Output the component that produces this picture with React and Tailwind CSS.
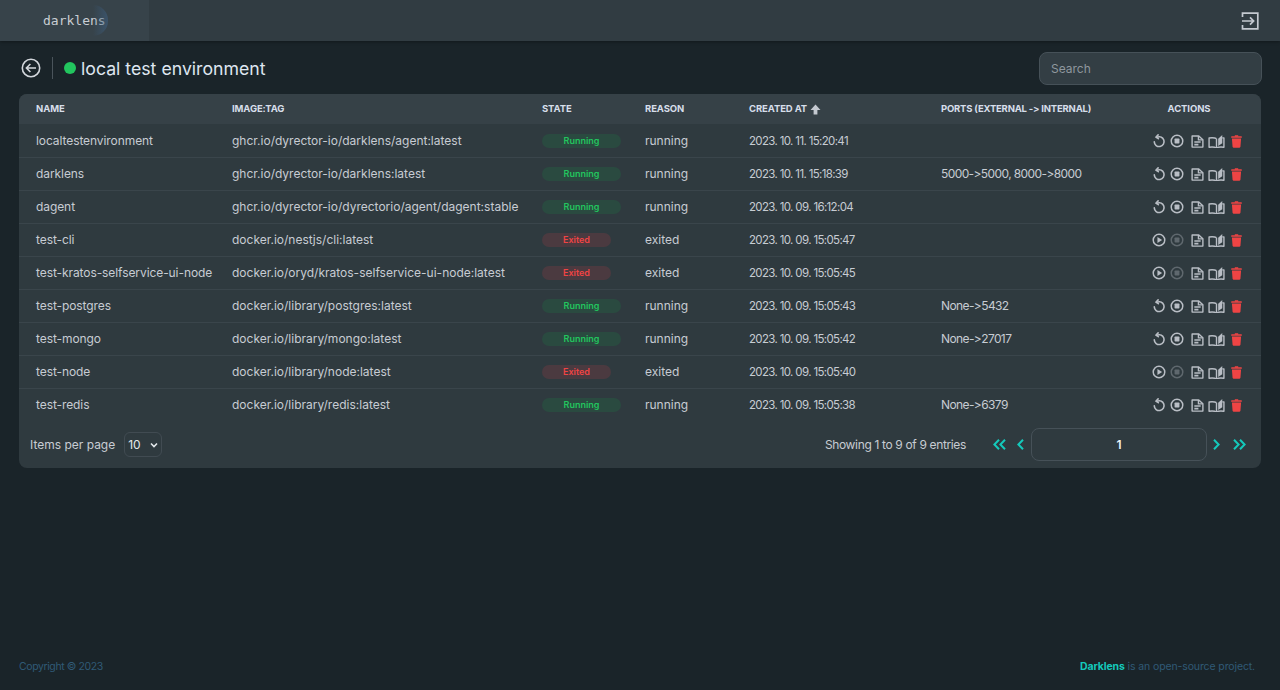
import React from "react";

const rows = [
  ["localtestenvironment", "ghcr.io/dyrector-io/darklens/agent:latest", true, "2023. 10. 11. 15:20:41", ""],
  ["darklens", "ghcr.io/dyrector-io/darklens:latest", true, "2023. 10. 11. 15:18:39", "5000->5000, 8000->8000"],
  ["dagent", "ghcr.io/dyrector-io/dyrectorio/agent/dagent:stable", true, "2023. 10. 09. 16:12:04", ""],
  ["test-cli", "docker.io/nestjs/cli:latest", false, "2023. 10. 09. 15:05:47", ""],
  ["test-kratos-selfservice-ui-node", "docker.io/oryd/kratos-selfservice-ui-node:latest", false, "2023. 10. 09. 15:05:45", ""],
  ["test-postgres", "docker.io/library/postgres:latest", true, "2023. 10. 09. 15:05:43", "None->5432"],
  ["test-mongo", "docker.io/library/mongo:latest", true, "2023. 10. 09. 15:05:42", "None->27017"],
  ["test-node", "docker.io/library/node:latest", false, "2023. 10. 09. 15:05:40", ""],
  ["test-redis", "docker.io/library/redis:latest", true, "2023. 10. 09. 15:05:38", "None->6379"],
];

const ic = "#b9bec5";

function Restart() {
  return (
    <svg width="14" height="14" viewBox="0 0 16 16" fill="none" stroke={ic} strokeWidth="1.8" strokeLinecap="round" className="block">
      <path d="M5.6 3.8A5.6 5.6 0 1 1 2.6 9" strokeDasharray="3.4 1.1 26 1" />
      <path d="M7 1 4.6 3.6 7.2 5.4" />
    </svg>
  );
}
function Stop({ dim }) {
  return (
    <svg width="14" height="14" viewBox="0 0 16 16" fill="none" opacity={dim ? 0.35 : 1} className="block">
      <circle cx="8" cy="8" r="6.6" stroke={ic} strokeWidth="1.7" />
      <rect x="5.2" y="5.2" width="5.6" height="5.6" rx="0.8" fill={ic} />
    </svg>
  );
}
function Play() {
  return (
    <svg width="14" height="14" viewBox="0 0 16 16" fill="none" className="block">
      <circle cx="8" cy="8" r="6.6" stroke={ic} strokeWidth="1.7" />
      <path d="M6.2 4.6v6.8L11.6 8z" fill={ic} />
    </svg>
  );
}
function Doc() {
  return (
    <svg width="13" height="13" viewBox="0 0 14 14" fill="none" stroke={ic} strokeWidth="1.5" className="block">
      <path d="M1.2 1h7.2l4.4 4v8H1.2z" strokeLinejoin="round" />
      <path d="M8 1.2v4h4.6" />
      <path d="M3.6 7.6h6.8M3.6 10.4h4.4" strokeWidth="1.7" />
    </svg>
  );
}
function Book() {
  return (
    <svg width="17" height="13" viewBox="0 0 18 14" fill="none" stroke={ic} strokeWidth="1.5" strokeLinejoin="round" className="block">
      <path d="M9 4C7.4 3 4.4 2.8 1 3.2v10c3.4-.4 6.4-.2 8 .8 1.6-1 4.6-1.2 8-.8v-10c-.6-.1-1.2-.1-1.8-.1" />
      <path d="M9 4v10" />
      <path d="M10.8 11.8V4L15.2 0v9z" fill={ic} stroke="none" />
    </svg>
  );
}
function Trash() {
  return (
    <svg width="11" height="13" viewBox="0 0 12 14" fill="#ef4444" className="block">
      <path d="M1 3.6h10l-.7 9.2a1 1 0 0 1-1 .9H2.7a1 1 0 0 1-1-.9z" />
      <rect x="0.2" y="1.4" width="11.6" height="1.5" rx="0.4" />
      <rect x="4" y="0.2" width="4" height="1.6" rx="0.4" />
    </svg>
  );
}
function Chevron({ dir, double }) {
  const d = dir === "left" ? "M6 .8 1.4 5.5 6 10.2" : "M1 .8 5.6 5.5 1 10.2";
  const d2 = dir === "left" ? "M12 .8 7.4 5.5 12 10.2" : "M7 .8 11.6 5.5 7 10.2";
  return (
    <svg width={double ? 13 : 7} height="11" viewBox={double ? "0 0 13 11" : "0 0 7 11"} fill="none" stroke="#14c9bb" strokeWidth="2" className="block">
      <path d={d} />
      {double && <path d={d2} />}
    </svg>
  );
}

export default function App() {
  return (
    <div className="flex flex-col h-[690px] bg-[#1a2429] overflow-hidden font-['Inter','Noto_Sans',sans-serif] text-[#c7ccd3] [font-variant-ligatures:none] [font-feature-settings:'calt'_0]">
      <header className="flex h-[41px] shrink-0 items-center justify-between bg-[#313c42] shadow-[0_1px_3px_rgba(0,0,0,0.35)]">
        <div className="flex h-full w-[149px] items-center bg-[#37434a] pl-[43px]">
          <span className="relative font-['DejaVu_Sans_Mono',monospace] text-[13px] leading-none text-[#c9ced3]">
            darklens
            <span className="absolute left-[50px] top-[-9px] h-[31px] w-[15px] rounded-r-full bg-gradient-to-r from-transparent to-[#3c5a78]/70" />
          </span>
        </div>
        <button className="mr-[21px] text-[#c4c9d0]">
          <svg width="18" height="18" viewBox="0 0 18 18" fill="none" stroke="#c4c9d0" strokeWidth="1.7" className="block">
            <path d="M1.5 5V1.2h15.3v15.6H1.5V13" />
            <path d="M1 9h11M9 5.4 12.6 9 9 12.6" />
          </svg>
        </button>
      </header>

      <main className="flex flex-1 flex-col px-[19px]">
        <div className="flex h-[53px] items-center justify-between">
          <div className="flex items-center pt-[1px]">
            <svg width="20" height="20" viewBox="0 0 20 20" fill="none" stroke="#d3d7dc" strokeWidth="1.6" className="ml-[2px]">
              <circle cx="10" cy="10" r="8.7" />
              <path d="M15 10H5.6M9.4 6 5.4 10l4 4" />
            </svg>
            <div className="ml-[11px] h-[22px] w-px bg-[#4a545b]" />
            <span className="ml-[11px] h-[12px] w-[12px] rounded-full bg-[#22c55e]" />
            <h1 className="ml-[5px] pt-[1px] text-[17.7px] font-normal leading-none text-[#dfe6f0]">local test environment</h1>
          </div>
          <div className="mr-[-1px] mt-[1px] flex h-[33px] w-[223px] items-center rounded-lg border border-[#465158] bg-[#333e44] pl-[11px] pt-[1px] text-[12px] text-[#8f979e]">
            Search
          </div>
        </div>

        <div className="w-[1242px] rounded-lg bg-[#2f3a3f]">
          <table className="w-full table-fixed border-collapse text-left">
            <colgroup>
              <col className="w-[213px]" />
              <col className="w-[310px]" />
              <col className="w-[103px]" />
              <col className="w-[104px]" />
              <col className="w-[192px]" />
              <col className="w-[190px]" />
              <col />
            </colgroup>
            <thead>
              <tr className="h-[30px] text-[9.5px] uppercase tracking-[-0.1px] text-[#d6deea]">
                <th className="rounded-tl-lg bg-[#364147] pl-[17px] font-bold">Name</th>
                <th className="bg-[#364147] font-bold">Image:Tag</th>
                <th className="bg-[#364147] font-bold">State</th>
                <th className="bg-[#364147] font-bold">Reason</th>
                <th className="bg-[#364147] font-bold">
                  <span className="flex items-center gap-[3px]">
                    Created at
                    <svg width="11" height="11" viewBox="0 0 11 11" fill="#c4c9d0">
                      <path d="M5.5.5 10.5 6H7.4v4.5H3.6V6H.5z" />
                    </svg>
                  </span>
                </th>
                <th className="bg-[#364147] font-bold tracking-[-0.2px]">Ports (External -&gt; Internal)</th>
                <th className="rounded-tr-lg bg-[#364147] pr-[14px] text-center font-bold">Actions</th>
              </tr>
            </thead>
            <tbody>
              {rows.map((r, i) => {
                const pad = i === 0 ? "pt-[1px]" : "";
                return (
                  <tr key={r[0]} className={`h-[33px] text-[12px] text-[#c7ccd3] ${i < rows.length - 1 ? "border-b border-[#3a454b]" : ""}`}>
                    <td className={`pl-[17px] whitespace-nowrap tracking-[-0.08px] ${pad}`}>{r[0]}</td>
                    <td className={`whitespace-nowrap ${pad}`}>{r[1]}</td>
                    <td className={pad}>
                      {r[2] ? (
                        <span className="mt-[1px] block h-[14px] w-[79px] rounded-full bg-[#2a4a40] text-center text-[9px] font-semibold leading-[14px] text-[#22c55e]">Running</span>
                      ) : (
                        <span className="mt-[1px] block h-[14px] w-[69px] rounded-full bg-[#4b3a40] text-center text-[9px] font-semibold leading-[14px] text-[#ef4444]">Exited</span>
                      )}
                    </td>
                    <td className={pad}>{r[2] ? "running" : "exited"}</td>
                    <td className={`whitespace-nowrap text-[11.5px] tracking-[-0.65px] ${i === 0 ? "pt-[3px]" : "pt-[2px]"}`}>{r[3]}</td>
                    <td className={`whitespace-nowrap tracking-[-0.6px] ${pad}`}>{r[4]}</td>
                    <td className={pad}>
                      <div className="mt-[1px] flex items-center pl-[21px]">
                        {r[2] ? <Restart /> : <Play />}
                        <span className="ml-[4px]"><Stop dim={!r[2]} /></span>
                        <span className="ml-[7px]"><Doc /></span>
                        <span className="ml-[4px]"><Book /></span>
                        <span className="ml-[6px]"><Trash /></span>
                      </div>
                    </td>
                  </tr>
                );
              })}
            </tbody>
          </table>

          <div className="flex h-[47px] items-center justify-between pl-[11px] pr-[15px]">
            <div className="flex items-center">
              <span className="text-[12px] text-[#c7ccd3]">Items per page</span>
              <span className="ml-[9px] flex h-[25px] w-[38px] items-center justify-between rounded-md border border-[#414b52] pl-[3px] pr-[2px] text-[12px] text-[#e4e8ec]">
                10
                <svg width="10" height="10" viewBox="0 0 10 10" fill="none" stroke="#e4e8ec" strokeWidth="1.6">
                  <path d="M2 3.5 5 6.5 8 3.5" />
                </svg>
              </span>
            </div>
            <div className="flex items-center">
              <span className="mr-[27px] text-[12px] tracking-[-0.35px] text-[#c7ccd3]">Showing 1 to 9 of 9 entries</span>
              <Chevron dir="left" double />
              <span className="ml-[11px]"><Chevron dir="left" /></span>
              <span className="ml-[7px] flex h-[33px] w-[176px] items-center justify-center rounded-lg border border-[#465158] text-[12px] font-semibold text-[#eef2f6]">1</span>
              <span className="ml-[6px]"><Chevron dir="right" /></span>
              <span className="ml-[13px]"><Chevron dir="right" double /></span>
            </div>
          </div>
        </div>

        <footer className="mt-auto flex h-[47px] items-center justify-between pr-[6px] text-[10.5px] text-[#305a76]">
          <span className="tracking-[-0.4px]">Copyright © 2023</span>
          <span className="tracking-[-0.12px]"><b className="font-bold text-[#14c9bb]">Darklens</b> is an open-source project.</span>
        </footer>
      </main>
    </div>
  );
}
